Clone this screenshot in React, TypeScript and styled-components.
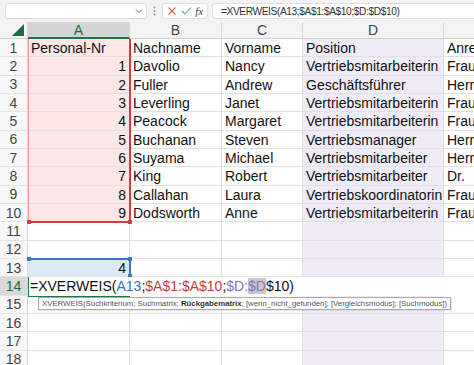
import React from "react";
import styled, { createGlobalStyle } from "styled-components";

const ROW_H = 18.33;
const HEAD_H = 17;
const COLS = [28, 102, 92, 81, 141, 110];
const colLeft = (i: number) => COLS.slice(0, i).reduce((a, b) => a + b, 0);
const rowTop = (r: number) => HEAD_H + (r - 1) * ROW_H;

const GlobalStyle = createGlobalStyle`
  html, body { margin: 0; padding: 0; background: #ffffff; overflow: hidden; }
  body { font-family: "Liberation Sans", Arial, sans-serif; }
`;

const Page = styled.div`
  width: 474px;
  height: 365px;
  overflow: hidden;
  background: #ffffff;
`;

const FormulaBar = styled.div`
  height: 22px;
  display: flex;
  align-items: center;
  padding-left: 5px;
  background: #f3f3f3;
  box-sizing: border-box;
`;

const NameBox = styled.div`
  width: 142px;
  height: 16px;
  box-sizing: border-box;
  background: #ffffff;
  border: 1px solid #dcdcdc;
  border-radius: 3px;
  display: flex;
  align-items: center;
  justify-content: flex-end;
  padding-right: 3px;
`;

const Dots = styled.div`
  width: 15px;
  display: flex;
  justify-content: center;
  color: #8a8a8a;
`;

const ActionBox = styled.div`
  width: 46px;
  height: 16px;
  box-sizing: border-box;
  background: #ffffff;
  border: 1px solid #e2e2e2;
  border-radius: 3px;
  display: flex;
  align-items: center;
  justify-content: space-around;
  padding: 0 2px;
`;

const Fx = styled.span`
  font-family: "Liberation Serif", "Times New Roman", serif;
  font-style: italic;
  font-size: 11px;
  color: #444;
`;

const FormulaInput = styled.div`
  flex: 1;
  margin-left: 4px;
  height: 16px;
  box-sizing: border-box;
  background: #ffffff;
  border: 1px solid #e2e2e2;
  border-right: none;
  border-radius: 3px 0 0 3px;
  display: flex;
  align-items: center;
  padding-left: 8px;
  font-size: 10.2px;
  letter-spacing: -0.4px;
  color: #333;
  white-space: nowrap;
`;

const SheetViewport = styled.div`
  width: 474px;
  overflow: hidden;
`;

const Sheet = styled.div`
  position: relative;
  display: grid;
  width: ${COLS.reduce((a, b) => a + b, 0)}px;
  grid-template-columns: ${COLS.map((c) => c + "px").join(" ")};
  grid-template-rows: ${HEAD_H}px repeat(18, ${ROW_H}px);
`;

const Corner = styled.div`
  background: #f3f3f3;
  border-right: 1px solid #d9d9d9;
  border-bottom: 1px solid #d0d0d0;
  box-sizing: border-box;
  display: flex;
  align-items: flex-end;
  justify-content: flex-end;
  padding: 0 3px 2px 0;
`;

const ColHead = styled.div<{ $active?: boolean }>`
  box-sizing: border-box;
  background: ${(p) => (p.$active ? "#d4d4d4" : "#f3f3f3")};
  border-right: 1px solid #d9d9d9;
  border-bottom: ${(p) => (p.$active ? "2px solid #217346" : "1px solid #d0d0d0")};
  color: ${(p) => (p.$active ? "#1d6b3d" : "#444")};
  font-size: 14px;
  display: flex;
  align-items: center;
  justify-content: center;
  overflow: hidden;
`;

const RowHead = styled.div<{ $active?: boolean }>`
  box-sizing: border-box;
  background: ${(p) => (p.$active ? "#d9d9d9" : "#f8f8f8")};
  border-right: 1px solid #d9d9d9;
  border-bottom: 1px solid #e4e4e4;
  color: ${(p) => (p.$active ? "#1d6b3d" : "#444")};
  font-size: 14px;
  display: flex;
  align-items: center;
  justify-content: center;
`;

type Fill = "none" | "pink" | "purple" | "blue";
const fills: Record<Fill, string> = {
  none: "#ffffff",
  pink: "#fce6e6",
  purple: "#efecf7",
  blue: "#dde9f7",
};

const Cell = styled.div<{ $fill: Fill; $right?: boolean }>`
  box-sizing: border-box;
  background: ${(p) => fills[p.$fill]};
  border-right: 1px solid #e1e1e1;
  border-bottom: 1px solid #e1e1e1;
  font-size: 14px;
  color: #111;
  display: flex;
  align-items: center;
  justify-content: ${(p) => (p.$right ? "flex-end" : "flex-start")};
  padding: 1px 3px 0 3px;
  white-space: nowrap;
  overflow: hidden;
`;

const RangeBox = styled.div`
  position: absolute;
  box-sizing: border-box;
  pointer-events: none;
`;

const RedRange = styled(RangeBox)`
  border-right: 2px solid #d23c3c;
  border-bottom: 2px solid #d23c3c;
  border-left: 1px solid #e8a0a0;
`;

const BlueRange = styled(RangeBox)`
  border-top: 2px solid #3b78c4;
  border-right: 2px solid #3b78c4;
`;

const Handle = styled.div<{ $color: string }>`
  position: absolute;
  width: 4px;
  height: 4px;
  background: ${(p) => p.$color};
`;

const EditRow = styled.div`
  position: absolute;
  box-sizing: border-box;
  background: #ffffff;
  display: flex;
  align-items: center;
  padding-left: 2px;
  font-size: 14px;
  white-space: nowrap;
  color: #111;
`;

const EditCellFrame = styled(RangeBox)`
  border-left: 1.5px solid #217346;
  border-bottom: 1.5px solid #217346;
`;

const Ref = styled.span<{ $c: string; $sel?: boolean }>`
  color: ${(p) => p.$c};
  background: ${(p) => (p.$sel ? "#c9c9c9" : "transparent")};
`;

const Tooltip = styled.div`
  position: absolute;
  box-sizing: border-box;
  height: 13px;
  background: #ffffff;
  border: 1px solid #a9a9a9;
  font-family: "Liberation Sans", Arial, sans-serif;
  font-size: 7.8px;
  line-height: 11px;
  color: #555;
  padding: 0 3px;
  white-space: nowrap;
  box-shadow: 1px 1px 1px rgba(0, 0, 0, 0.08);
`;

const Bold = styled.b`
  color: #333;
`;

const SelectAllTriangle = () => (
  <svg width="12" height="12" viewBox="0 0 12 12">
    <polygon points="12,0 12,12 0,12" fill="#1f6b3d" />
  </svg>
);

const Chevron = () => (
  <svg width="8" height="6" viewBox="0 0 8 6">
    <path d="M1 1.5 L4 4.5 L7 1.5" stroke="#666" strokeWidth="1" fill="none" />
  </svg>
);

const VDots = () => (
  <svg width="3" height="10" viewBox="0 0 3 10">
    <circle cx="1.5" cy="1.5" r="0.9" fill="#888" />
    <circle cx="1.5" cy="5" r="0.9" fill="#888" />
    <circle cx="1.5" cy="8.5" r="0.9" fill="#888" />
  </svg>
);

const Cross = () => (
  <svg width="10" height="10" viewBox="0 0 10 10">
    <path d="M1.5 1.5 L8.5 8.5 M8.5 1.5 L1.5 8.5" stroke="#e05a5a" strokeWidth="1.1" />
  </svg>
);

const Check = () => (
  <svg width="11" height="10" viewBox="0 0 11 10">
    <path d="M1 5 L4 8 L10 1.5" stroke="#6aa56e" strokeWidth="1.1" fill="none" />
  </svg>
);

type Row = [string, string, string, string, string];
const data: Row[] = [
  ["Personal-Nr", "Nachname", "Vorname", "Position", "Anrede"],
  ["1", "Davolio", "Nancy", "Vertriebsmitarbeiterin", "Frau"],
  ["2", "Fuller", "Andrew", "Geschäftsführer", "Herr"],
  ["3", "Leverling", "Janet", "Vertriebsmitarbeiterin", "Frau"],
  ["4", "Peacock", "Margaret", "Vertriebsmitarbeiterin", "Frau"],
  ["5", "Buchanan", "Steven", "Vertriebsmanager", "Herr"],
  ["6", "Suyama", "Michael", "Vertriebsmitarbeiter", "Herr"],
  ["7", "King", "Robert", "Vertriebsmitarbeiter", "Dr."],
  ["8", "Callahan", "Laura", "Vertriebskoordinatorin", "Frau"],
  ["9", "Dodsworth", "Anne", "Vertriebsmitarbeiterin", "Frau"],
];

const letters = ["A", "B", "C", "D", "E"];

export default function App() {
  const rows: Row[] = [];
  for (let r = 1; r <= 18; r++) {
    if (r <= 10) rows.push(data[r - 1]);
    else if (r === 13) rows.push(["4", "", "", "", ""]);
    else rows.push(["", "", "", "", ""]);
  }

  const fillFor = (r: number, c: number): Fill => {
    if (c === 0 && r <= 10) return "pink";
    if (c === 0 && r === 13) return "blue";
    if (c === 3) return "purple";
    return "none";
  };

  const aLeft = colLeft(1);
  const aW = COLS[1];
  const red = { left: aLeft, top: rowTop(1), width: aW + 1, height: 10 * ROW_H + 1 };
  const blue = { left: aLeft, top: rowTop(13) - 1, width: aW + 1, height: ROW_H + 1 };
  const edit = { left: aLeft, top: rowTop(14), width: 474 - aLeft, height: ROW_H };

  return (
    <Page>
      <GlobalStyle />
      <FormulaBar>
        <NameBox>
          <Chevron />
        </NameBox>
        <Dots>
          <VDots />
        </Dots>
        <ActionBox>
          <Cross />
          <Check />
          <Fx>fx</Fx>
        </ActionBox>
        <FormulaInput>=XVERWEIS(A13;$A$1:$A$10;$D:$D$10)</FormulaInput>
      </FormulaBar>
      <SheetViewport>
        <Sheet>
          <Corner>
            <SelectAllTriangle />
          </Corner>
          {letters.map((l, i) => (
            <ColHead key={l} $active={i === 0}>
              {l}
            </ColHead>
          ))}
          {rows.map((row, ri) => {
            const r = ri + 1;
            return (
              <React.Fragment key={r}>
                <RowHead $active={r === 14}>{r}</RowHead>
                {row.map((v, ci) => (
                  <Cell key={ci} $fill={fillFor(r, ci)} $right={ci === 0 && r !== 1}>
                    {v}
                  </Cell>
                ))}
              </React.Fragment>
            );
          })}

          <RedRange
            style={{ left: red.left, top: red.top, width: red.width, height: red.height }}
          />
          <Handle $color="#d23c3c" style={{ left: red.left - 1, top: red.top + red.height - 3 }} />
          <Handle
            $color="#d23c3c"
            style={{ left: red.left + red.width - 3, top: red.top + red.height - 3 }}
          />

          <BlueRange
            style={{ left: blue.left, top: blue.top, width: blue.width, height: blue.height }}
          />
          <Handle $color="#3b78c4" style={{ left: blue.left - 1, top: blue.top - 1 }} />
          <Handle $color="#3b78c4" style={{ left: blue.left + blue.width - 3, top: blue.top - 1 }} />
          <Handle
            $color="#3b78c4"
            style={{ left: blue.left + blue.width - 3, top: blue.top + blue.height - 3 }}
          />

          <EditRow style={{ left: edit.left, top: edit.top, width: edit.width, height: edit.height }}>
            =XVERWEIS(<Ref $c="#2f74c0">A13</Ref>;<Ref $c="#c8383f">$A$1:$A$10</Ref>;
            <Ref $c="#8c6cc8">$D:</Ref>
            <Ref $c="#8c6cc8" $sel>
              $D
            </Ref>
            $10)
          </EditRow>
          <EditCellFrame
            style={{ left: edit.left, top: edit.top, width: aW, height: edit.height + 1 }}
          />

          <Tooltip style={{ left: 38, top: rowTop(15) + 1 }}>
            XVERWEIS(Suchkriterium; Suchmatrix; <Bold>Rückgabematrix</Bold>;
            [wenn_nicht_gefunden]; [Vergleichsmodus]; [Suchmodus])
          </Tooltip>
        </Sheet>
      </SheetViewport>
    </Page>
  );
}
